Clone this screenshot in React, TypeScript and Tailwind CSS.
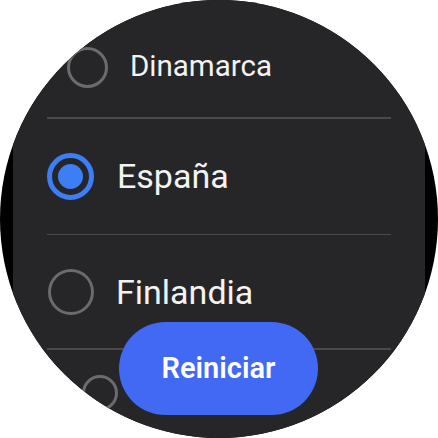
import React from "react";

const Radio: React.FC<{ selected?: boolean; size: "lg" | "md" | "sm" }> = ({ selected, size }) => {
  if (selected) {
    return (
      <div className="w-[47px] h-[47px] shrink-0 rounded-full border-[5px] border-[#3d7ef7] flex items-center justify-center">
        <div className="w-[25px] h-[25px] rounded-full bg-[#3d7ef7]" />
      </div>
    );
  }
  const dims =
    size === "lg" ? "w-[46px] h-[46px] border-[3.5px]" : size === "md" ? "w-[41px] h-[41px] border-[3px]" : "w-[36px] h-[36px] border-[3px]";
  return <div className={`${dims} shrink-0 rounded-full border-[#6b6b6d]`} />;
};

const Divider = () => <div className="mx-[34px] h-[1.5px] bg-[#4a4a4d] shrink-0" />;

export default function App() {
  return (
    <div className="w-[438px] h-[438px] bg-white" style={{ fontFamily: "Roboto, 'Noto Sans', sans-serif" }}>
      <div className="relative w-[438px] h-[438px] rounded-full bg-black overflow-hidden">
        <div className="mx-[13px] h-full bg-[#262628] flex flex-col pt-[17px]">
          {/* Dinamarca (scaled near the top edge) */}
          <div className="h-[100px] flex items-center pl-[54px] gap-[22px] shrink-0">
            <Radio size="md" />
            <span className="text-[29.5px] text-[#f3f3f3] leading-none">Dinamarca</span>
          </div>
          <Divider />
          <div className="h-[115px] flex items-center pl-[34px] gap-[23px] shrink-0">
            <Radio size="lg" selected />
            <span className="text-[34px] text-[#f3f3f3] leading-none">España</span>
          </div>
          <Divider />
          <div className="h-[113px] flex items-center pl-[35px] gap-[22px] shrink-0">
            <Radio size="lg" />
            <span className="text-[34px] text-[#f3f3f3] leading-none">Finlandia</span>
          </div>
          <Divider />
          {/* next item, hidden behind the button */}
          <div className="h-[86px] flex items-center pl-[69px] shrink-0">
            <Radio size="sm" />
          </div>
        </div>
        <button className="absolute left-[119px] top-[322px] w-[199px] h-[93px] rounded-full bg-[#4169f4] text-white text-[29px] font-semibold flex items-center justify-center">
          Reiniciar
        </button>
      </div>
    </div>
  );
}
